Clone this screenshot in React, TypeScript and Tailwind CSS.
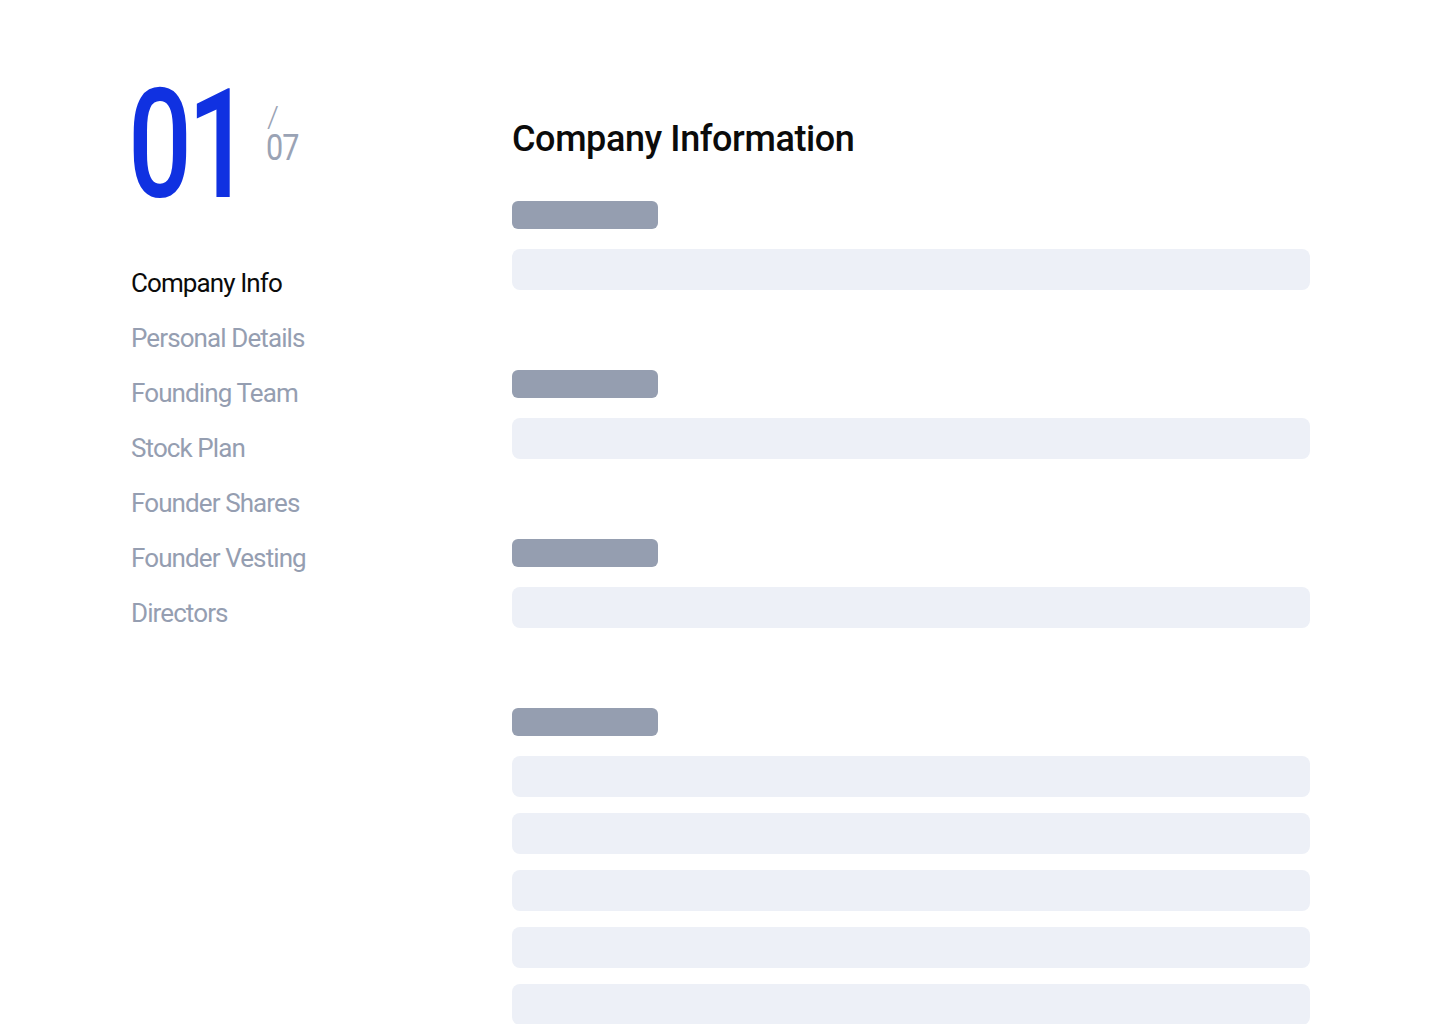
import React from "react";

const navItems = [
  "Company Info",
  "Personal Details",
  "Founding Team",
  "Stock Plan",
  "Founder Shares",
  "Founder Vesting",
  "Directors",
];

function Field({ rows = 1 }: { rows?: number }) {
  return (
    <div className="flex flex-col">
      <div className="h-[28px] w-[146px] rounded-[6px] bg-[#959eb0]" />
      <div className="mt-[20px] flex flex-col gap-[16px]">
        {Array.from({ length: rows }).map((_, i) => (
          <div key={i} className="h-[41px] w-[798px] rounded-[8px] bg-[#edf0f7]" />
        ))}
      </div>
    </div>
  );
}

export default function App() {
  return (
    <div
      className="flex h-[1024px] w-[1440px] overflow-hidden bg-white"
      style={{ fontFamily: "Roboto, 'Noto Sans', sans-serif" }}
    >
      <aside className="w-[381px] shrink-0 pl-[128px] pt-[69px]">
        <div className="flex items-start">
          <div className="w-[138px] shrink-0">
            <span className="inline-block origin-left scale-x-[0.74] text-[152px] font-medium leading-none tracking-[-6px] text-[#1031e1]">
              01
            </span>
          </div>
          <div className="mt-[35px] flex flex-col text-[#9aa3b5]">
            <span className="ml-[1px] h-[26px] text-[30px] font-light leading-[26px]">/</span>
            <span className="mt-[3px] inline-block origin-left scale-x-[0.85] text-[36px] leading-[30px] tracking-[-1px]">
              07
            </span>
          </div>
        </div>
        <nav className="mt-[45px] flex flex-col gap-[21px] pl-[3px]">
          {navItems.map((t, i) => (
            <div
              key={t}
              className={`text-[26px] leading-[34px] tracking-[-0.9px] ${
                i === 0 ? "text-[#0b0b0b]" : "text-[#959eb1]"
              }`}
            >
              {t}
            </div>
          ))}
        </nav>
      </aside>
      <main className="flex-1 pl-[131px] pt-[114px]">
        <h1 className="text-[36px] font-medium leading-[50px] tracking-[-0.4px] text-[#0b0b0b]">
          Company Information
        </h1>
        <div className="mt-[37px] flex flex-col gap-[80px]">
          <Field />
          <Field />
          <Field />
          <Field rows={5} />
        </div>
      </main>
    </div>
  );
}
